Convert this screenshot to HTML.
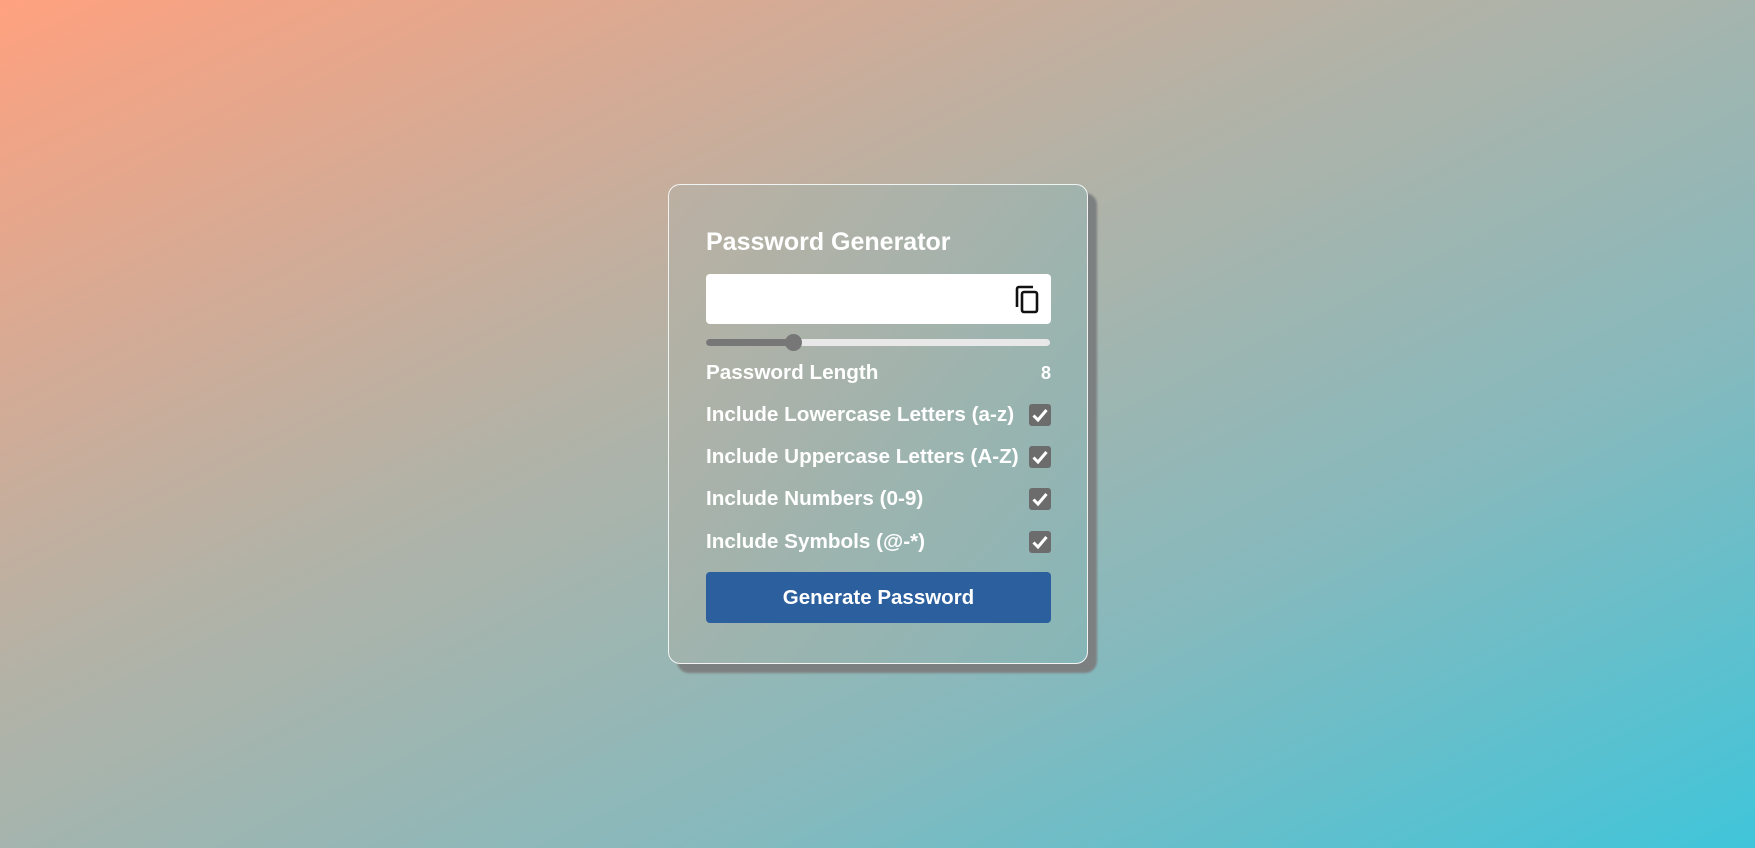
<!DOCTYPE html>
<html><head><style>
html,body{margin:0;padding:0;width:1755px;height:848px;overflow:hidden}
body{background:linear-gradient(to bottom right,#ffa17f 0%,#b4b2a6 40%,#86b9bd 70%,#40c5da 100%);font-family:"Liberation Sans",Arial,sans-serif;position:relative}
.shadow{position:absolute;left:677px;top:193px;width:420px;height:480px;background:#7d8080;border-radius:12px;filter:blur(1px)}
.card{position:absolute;left:668px;top:184px;width:418px;height:478px;border:1px solid rgba(255,255,255,0.85);border-radius:12px;background:linear-gradient(to bottom right,#bcb0a2,#86b6b8)}
h1{position:absolute;left:37px;top:42px;margin:0;font-size:25px;color:#fff;line-height:30px}
.inp{position:absolute;left:37px;top:89px;width:345px;height:50px;background:#fff;border-radius:4px}
.track{position:absolute;left:37px;top:154px;width:344px;height:7px;border-radius:4px;background:#e8e8e8}
.fill{position:absolute;left:0;top:0;width:88px;height:7px;border-radius:4px;background:#777}
.thumb{position:absolute;left:79px;top:-5px;width:17px;height:17px;border-radius:50%;background:#777}
.row{position:absolute;left:37px;width:345px;color:#fff;font-weight:bold;font-size:20.7px;height:24px;line-height:24px}
.cb{position:absolute;right:0;top:1px;width:22px;height:22px;background:#6c6c6c;border-radius:3px}
.btn{position:absolute;left:37px;top:387px;width:345px;height:51px;background:#2c5f9e;border-radius:4px;color:#fff;font-weight:bold;font-size:20.5px;text-align:center;line-height:51px}
</style></head><body>
<div class="shadow"></div>
<div class="card">
<h1>Password Generator</h1>
<div class="inp"><svg style="position:absolute;right:9px;top:11px" width="28" height="30" viewBox="0 0 28 30"><path d="M3 22V4a2 2 0 0 1 2-2h14" fill="none" stroke="#111" stroke-width="2.6"/><rect x="8" y="7" width="15" height="20" rx="2" fill="none" stroke="#111" stroke-width="2.6"/></svg></div>
<div class="track"><div class="fill"></div><div class="thumb"></div></div>
<div class="row" style="top:176px">Password Length<span style="position:absolute;right:0;font-size:18px">8</span></div>
<div class="row" style="top:218px">Include Lowercase Letters (a-z)<span class="cb"><svg width="22" height="22"><path d="M4.5 11.5l4.5 4.5 8.5-10" fill="none" stroke="#fff" stroke-width="3"/></svg></span></div>
<div class="row" style="top:260px">Include Uppercase Letters (A-Z)<span class="cb"><svg width="22" height="22"><path d="M4.5 11.5l4.5 4.5 8.5-10" fill="none" stroke="#fff" stroke-width="3"/></svg></span></div>
<div class="row" style="top:302px">Include Numbers (0-9)<span class="cb"><svg width="22" height="22"><path d="M4.5 11.5l4.5 4.5 8.5-10" fill="none" stroke="#fff" stroke-width="3"/></svg></span></div>
<div class="row" style="top:345px">Include Symbols (@-*)<span class="cb"><svg width="22" height="22"><path d="M4.5 11.5l4.5 4.5 8.5-10" fill="none" stroke="#fff" stroke-width="3"/></svg></span></div>
<div class="btn">Generate Password</div>
</div>
</body></html>
